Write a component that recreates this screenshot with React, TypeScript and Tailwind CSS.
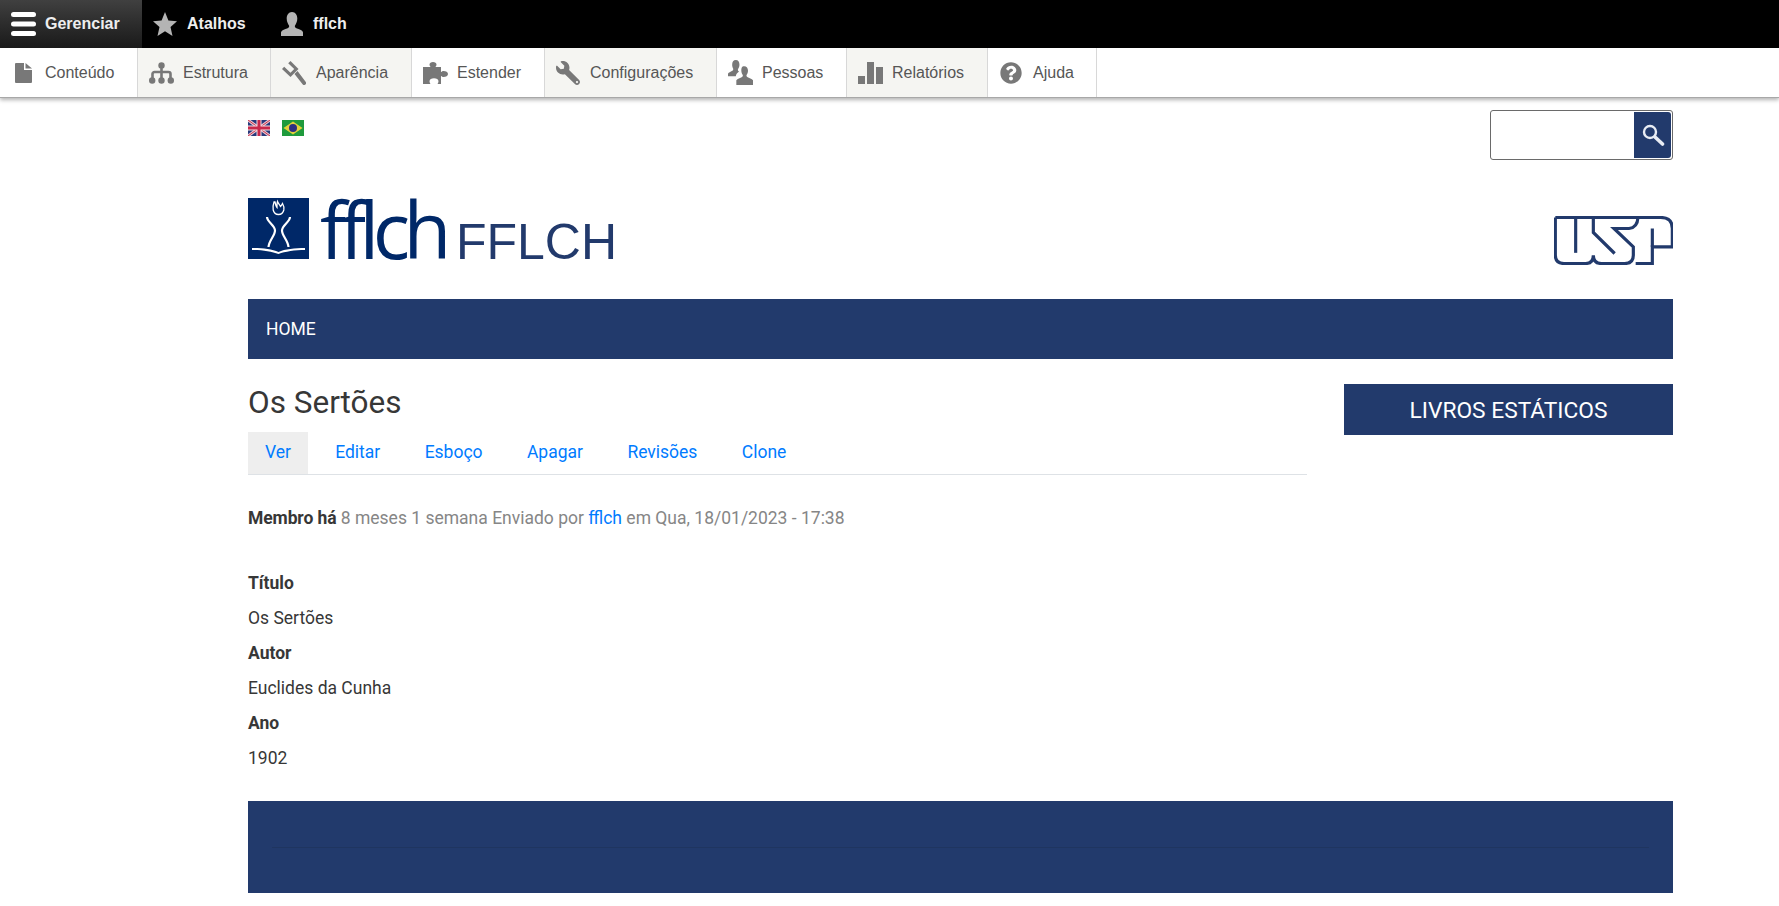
import { FaQuestionCircle, FaWrench } from "react-icons/fa"

const trayItems = [
  { label: "Conteúdo", w: "w-[138px]", bg: "bg-white", icon: <FileIcon /> },
  { label: "Estrutura", w: "w-[133px]", bg: "bg-[#f5f5f2]", icon: <SitemapIcon /> },
  { label: "Aparência", w: "w-[141px]", bg: "bg-[#f5f5f2]", icon: <HammerIcon /> },
  { label: "Estender", w: "w-[133px]", bg: "bg-white", icon: <PuzzleIcon /> },
  { label: "Configurações", w: "w-[172px]", bg: "bg-[#f5f5f2]", icon: <FaWrench className="h-[24px] w-[24px] -scale-x-100 fill-[#787878]" /> },
  { label: "Pessoas", w: "w-[130px]", bg: "bg-white", icon: <PeopleIcon /> },
  { label: "Relatórios", w: "w-[141px]", bg: "bg-[#f5f5f2]", icon: <BarsIcon /> },
  { label: "Ajuda", w: "w-[109px]", bg: "bg-white", icon: <FaQuestionCircle className="ml-[1px] h-[22px] w-[22px] fill-[#787878]" /> },
]

function FileIcon() {
  return (
    <svg viewBox="0 0 17 20" className="ml-[4px] h-[20px] w-[17px] fill-[#787878]">
      <path d="M1 0h8v7h8v12a1 1 0 0 1-1 1H1a1 1 0 0 1-1-1V1a1 1 0 0 1 1-1z" />
      <path d="M10.500 0L17 5.500h-6.500z" />
    </svg>
  )
}

function SitemapIcon() {
  return (
    <svg viewBox="0 0 25 22" className="h-[22px] w-[25px]">
      <path d="M12.500 4v6M3.500 17v-5a2 2 0 0 1 2-2h14a2 2 0 0 1 2 2v5M12.500 10v7" stroke="#787878" strokeWidth="2.600" fill="none" />
      <circle cx="12.500" cy="3.400" r="3.200" fill="#787878" />
      <circle cx="3.200" cy="18.500" r="3.200" fill="#787878" />
      <circle cx="12.500" cy="18.500" r="3.200" fill="#787878" />
      <circle cx="21.800" cy="18.500" r="3.200" fill="#787878" />
    </svg>
  )
}

function HammerIcon() {
  return (
    <svg viewBox="0 0 24 24" className="h-[24px] w-[24px] fill-[#787878]">
      <path d="M8.500 0L16.500 8 8.500 16 0 8l2.200-2.200 6.300 6 3.700-3.800-6-5.700z" />
      <path d="M12.500 13l3-3L23.600 20.800a1.800 1.800 0 0 1-3 2.500z" />
    </svg>
  )
}

function PuzzleIcon() {
  return (
    <svg viewBox="0 0 25 22" className="h-[22px] w-[25px] fill-[#787878]">
      <path d="M0 5h7.500C7 4 6.500 3.500 6.500 2.500 6.500 1 8 0 10 0s3.500 1 3.500 2.500c0 1-.5 1.500-1 2.500H18v5c1-.5 1.500-1 2.500-1 2.500 0 4.500 1.300 4.500 3s-2 3-4.500 3c-1 0-1.500-.5-2.500-1v8h-3.500c.5-1 1-1.800 1-2.800 0-1.700-2-3-4.500-3s-4.500 1.300-4.500 3c0 1 .5 1.800 1 2.800H0z" />
    </svg>
  )
}

function PeopleIcon() {
  return (
    <svg viewBox="0 0 24 24" className="h-[25px] w-[25px] fill-[#787878]">
      <path d="M7.500 0C9.800 0 11 2 11 4.500c0 2-1 3.500-1.500 4.500 0 1 .2 1.500 1.200 2-1.700 1-3 2.500-3.200 4.500H0v-2c0-1.500 3-2.500 4.500-3.500.6-.4.6-1 .5-1.500C4.500 7.500 4 6 4 4.500 4 2 5.200 0 7.500 0z" />
      <path d="M15.500 6c2.400 0 3.700 2 3.700 4.300 0 1.700-.8 3.200-1.400 4.200-.2.800 0 1.400.7 1.900 1.700 1 4.500 1.600 5.500 3.100V24H8v-4.500c1-1.500 3.800-2.100 5.500-3.100.7-.5.900-1.100.7-1.900-.6-1-1.400-2.500-1.400-4.200C12.800 8 13.100 6 15.500 6z" />
    </svg>
  )
}

function BarsIcon() {
  return (
    <svg viewBox="0 0 25 22" className="h-[22px] w-[25px] fill-[#787878]">
      <rect x="0" y="14" width="7" height="8" />
      <rect x="9" y="0" width="7" height="22" />
      <rect x="18" y="5" width="7" height="17" />
    </svg>
  )
}

function UkFlag() {
  return (
    <svg viewBox="0 0 22 16" className="h-[16px] w-[22px]">
      <rect width="22" height="16" fill="#27397c" />
      <path d="M0 0l22 16M22 0L0 16" stroke="#e9c6d0" strokeWidth="3" />
      <path d="M0 0l22 16M22 0L0 16" stroke="#c9364f" strokeWidth="1" />
      <path d="M11 0v16M0 8h22" stroke="#f3dfe4" strokeWidth="5" />
      <path d="M11 0v16M0 8h22" stroke="#c8284a" strokeWidth="3" />
    </svg>
  )
}

function BrFlag() {
  return (
    <svg viewBox="0 0 22 16" className="h-[16px] w-[22px]">
      <rect width="22" height="16" fill="#1f9a3c" />
      <path d="M11 1.500L20.500 8 11 14.500 1.500 8z" fill="#e2d03a" />
      <circle cx="11" cy="8" r="4" fill="#2c2f80" />
    </svg>
  )
}

function FflchMark() {
  return (
    <svg viewBox="0 0 61 61" className="h-[61px] w-[61px] shrink-0">
      <rect width="61" height="61" fill="#002868" />
      <path d="M26 4c-1 3-1.500 5-.8 8 .6 2.500 2.400 4.500 5.300 4.500s4.700-2 5.300-4.500c.6-3-.4-5-1.300-6.500-.7 1.500-1.200 2.500-2 3-.7-2-2.500-3-3-5-.8 2-.5 4-.5 6-1-1-1.500-3-2-5.500z" fill="none" stroke="#fff" strokeWidth="1.300" />
      <path d="M19 19C19 24 27 27 27 32.500C27 38 21 42 20.500 49M42 19C42 24 34 27 34 32.500C34 38 40 42 40.500 49" fill="none" stroke="#fff" strokeWidth="2.200" />
      <path d="M4 50c10 0 20 1 26.500 4 6.500-3 16.500-4 26.500-4v2c-10 0-20 1.500-26.500 4-6.500-2.500-16.500-4-26.500-4z" fill="#fff" />
    </svg>
  )
}

function UspLogo() {
  return (
    <svg viewBox="10 13 357 146" className="h-[49px] w-[119px]" fill="none" stroke="#223a6c" strokeWidth="9.500">
      <path d="M14 17H330Q365 17 365 50V105H305V155H255" />
      <path d="M75 17V123" />
      <path d="M128 17V62L192 125" />
      <path d="M14 17V130Q14 155 40 155H105Q128 155 128 130Q128 155 152 155H222Q248 155 248 130V105L190 50H235Q260 48 262 17" />
      <path d="M305 50V105" />
    </svg>
  )
}

function Row({ label, value }: { label: string; value: string }) {
  return (
    <>
      <div className="h-[35px] font-bold leading-[35px]">{label}</div>
      <div className="h-[35px] leading-[35px]">{value}</div>
    </>
  )
}

export default function App() {
  return (
    <div className="min-h-[906px] bg-white font-['Roboto',sans-serif] text-[17.5px] text-[#373737]">
      {/* Admin toolbar */}
      <div className="font-['Liberation_Sans',sans-serif]">
        <div className="flex h-[48px] items-stretch bg-black text-[16px] font-bold text-[#eee]">
          <div className="flex w-[142px] shrink-0 items-center gap-[9px] bg-gradient-to-b from-[#404040] to-[#1a1a1a] pl-[11px]">
            <svg viewBox="0 0 25 24" className="h-[24px] w-[25px] shrink-0">
              <rect y="0" width="25" height="5" rx="2.500" fill="#fff" />
              <rect y="9.500" width="25" height="5" rx="2.500" fill="#fff" />
              <rect y="19" width="25" height="5" rx="2.500" fill="#fff" />
            </svg>
            <span>Gerenciar</span>
          </div>
          <div className="flex w-[127px] items-center pl-[11px]">
            <svg viewBox="0 0 24 24" className="mr-[10px] h-[24px] w-[24px] fill-[#b4b4b4]">
              <path d="M12 0l3.400 8.500 8.600.7-6.500 5.800 2 9-7.500-4.800L4.500 24l2-9L0 9.200l8.600-.7z" />
            </svg>
            <span>Atalhos</span>
          </div>
          <div className="flex items-center pl-[11px]">
            <svg viewBox="0 0 22 24" className="mr-[9px] h-[24px] w-[24px] fill-[#b4b4b4]">
              <path d="M11 0c3.500 0 5.300 3 5.300 6.500 0 3-1.300 5.500-2.300 7-.4 1 0 2 1 2.500 2 1.200 7 2 7 4.500V24H0v-3.500C0 18 5 17.200 7 16c1-.5 1.400-1.500 1-2.500-1-1.500-2.300-4-2.300-7C5.700 3 7.500 0 11 0z" />
            </svg>
            <span>fflch</span>
          </div>
        </div>
        <div className="flex h-[50px] items-stretch border-b-[1px] border-[#a8a8a8] bg-white text-[16px] text-[#565656] shadow-[0_2px_4px_rgba(0,0,0,0.3)]">
          {trayItems.map((item) => (
            <div key={item.label} className={`flex shrink-0 items-center border-r border-[#d8d8d8] ${item.w} ${item.bg}`}>
              <span className="flex w-[45px] shrink-0 items-center pl-[11px]">{item.icon}</span>
              {item.label}
            </div>
          ))}
        </div>
      </div>

      <div className="ml-[248px] w-[1425px]">
        {/* Flags and search */}
        <div className="flex h-[62px] items-start justify-between pt-[12px]">
          <div className="mt-[10px] flex gap-[12px]">
            <UkFlag />
            <BrFlag />
          </div>
          <div className="flex h-[50px] w-[183px] justify-end rounded-[3px] border border-[#6a6a6a] p-[1px]">
            <div className="flex h-full w-[37px] items-center justify-center rounded-r-[3px] bg-[#223a6c]">
              <svg viewBox="0 0 24 24" className="h-[24px] w-[24px]" fill="none" stroke="#e8ecf4">
                <circle cx="9" cy="9" r="6" strokeWidth="2.400" />
                <path d="M14 14l7.500 7" strokeWidth="3.600" strokeLinecap="round" />
              </svg>
            </div>
          </div>
        </div>

        {/* Logos */}
        <div className="flex h-[139px] items-start justify-between">
          <div className="mt-[38px] flex items-start">
            <FflchMark />
            <span className="ml-[11px] mt-[-16px] font-['Open_Sans',sans-serif] text-[78px] leading-[94px] tracking-[-6.5px] text-[#002868]">fflch</span>
            <span className="ml-[11px] mt-[19px] font-['Liberation_Sans',sans-serif] text-[50px] leading-[50px] text-[#223a6c]">FFLCH</span>
          </div>
          <div className="mt-[56px]">
            <UspLogo />
          </div>
        </div>

        {/* Main nav */}
        <div className="flex h-[60px] items-center bg-[#223a6c] px-[18px] text-white">HOME</div>

        <div className="mt-[25px] flex justify-between">
          <main className="w-[1059px]">
            <h1 className="text-[31.5px] font-normal leading-[38px]">Os Sertões</h1>
            <div className="mt-[10px] flex h-[43px] items-stretch border-b border-[#dee2e6] text-[#007bff]">
              <a className="flex items-center bg-[#eee] px-[17px] pb-[2px]">Ver</a>
              <div className="ml-[5px] flex items-stretch">
                {["Editar", "Esboço", "Apagar", "Revisões", "Clone"].map((tab) => (
                  <a key={tab} className="flex items-center px-[22.2px] pb-[2px]">{tab}</a>
                ))}
              </div>
            </div>
            <p className="mt-[31px] leading-[24px] text-[#868686]">
              <strong className="font-bold tracking-[-0.1px] text-[#373737]">Membro há</strong> 8 meses 1 semana Enviado por <a className="text-[#007bff]">fflch</a> em Qua, 18/01/2023 - 17:38
            </p>
            <div className="mt-[36px]">
              <Row label="Título" value="Os Sertões" />
              <Row label="Autor" value="Euclides da Cunha" />
              <Row label="Ano" value="1902" />
            </div>
          </main>
          <aside className="w-[329px]">
            <div className="flex h-[51px] items-center justify-center bg-[#223a6c] pt-[3px] text-[22.75px] text-white">LIVROS ESTÁTICOS</div>
          </aside>
        </div>

        {/* Footer */}
        <div className="mt-[25px] flex h-[92px] items-center bg-[#223a6c] px-[24px]">
          <div className="h-px w-full bg-[#1f3560]" />
        </div>
      </div>
    </div>
  )
}
